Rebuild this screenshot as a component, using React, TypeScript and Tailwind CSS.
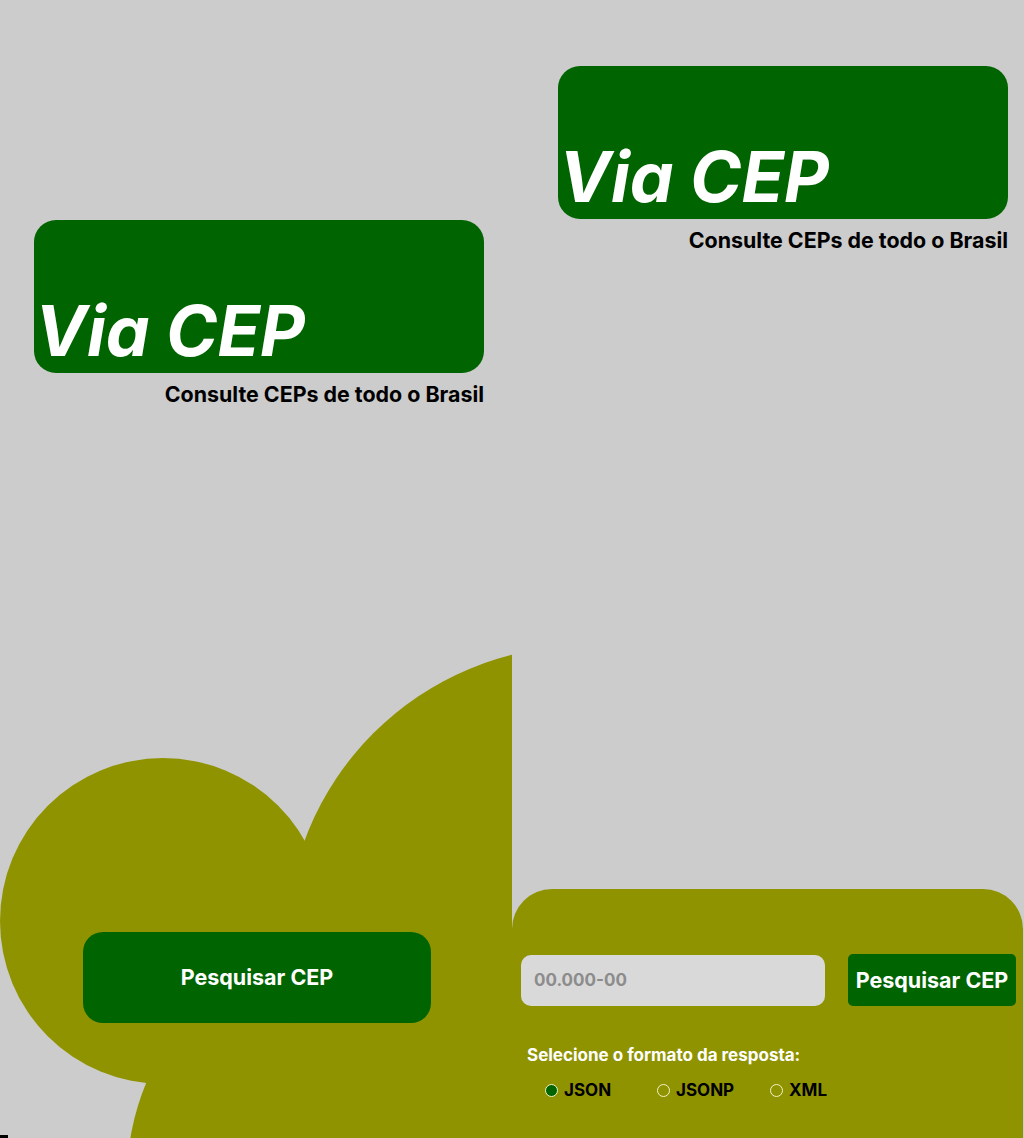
import React from "react";

function Header() {
  return (
    <div className="flex w-[450px] flex-col">
      <div className="flex h-[153px] w-[450px] items-end rounded-[22px] bg-[#006400] pl-[1px] pb-[8px]">
        <h1 className="text-[69.5px] font-bold italic leading-[68px] text-white">Via CEP</h1>
      </div>
      <p className="mt-[9px] text-right text-[21.4px] font-bold leading-[24px] text-black">
        Consulte CEPs de todo o Brasil
      </p>
    </div>
  );
}

function Radio({ label, checked, w }: { label: string; checked?: boolean; w: string }) {
  return (
    <label className={`flex items-center gap-[6px] ${w}`}>
      <span
        className={
          checked
            ? "h-[13px] w-[13px] rounded-full border border-[#f2f2c8] bg-[#006400]"
            : "h-[13px] w-[13px] rounded-full border border-[#f2f2c8]"
        }
      />
      <span className="text-[17px] font-bold leading-[20px] text-black">{label}</span>
    </label>
  );
}

export default function App() {
  return (
    <div
      className="grid h-[1138px] w-[1024px] grid-cols-2 overflow-hidden bg-[#cccccc]"
      style={{ fontFamily: "Inter, 'Liberation Sans', sans-serif" }}
    >
      {/* Left column */}
      <div className="relative flex flex-col overflow-hidden pl-[34px] pt-[220px]">
        <div className="absolute left-[286px] top-[646px] h-[596px] w-[596px] rounded-full bg-[#8f9300]" />
        <div className="absolute left-[127px] top-[929px] h-[500px] w-[500px] rounded-full bg-[#8f9300]" />
        <div className="absolute left-0 top-[758px] h-[326px] w-[326px] rounded-full bg-[#8f9300]" />
        <div className="absolute bottom-0 left-0 h-[3px] w-[8px] bg-black" />
        <div className="relative">
          <Header />
        </div>
        <button className="relative ml-[49px] mt-[526px] flex h-[91px] w-[348px] items-center justify-center rounded-[20px] bg-[#006400] text-[21.5px] font-bold text-white">
          Pesquisar CEP
        </button>
      </div>

      {/* Right column */}
      <div className="flex flex-col overflow-hidden pl-[46px] pt-[66px]">
        <Header />
        <div className="-ml-[46px] mt-auto h-[249px] w-[511px] rounded-t-[40px] bg-[#8f9300] pl-[9px] pt-[65px]">
          <div className="flex items-center">
            <input
              placeholder="00.000-00"
              className="h-[51px] w-[304px] rounded-[10px] bg-[#d9d9d9] px-[13px] text-[17px] font-bold text-[#333] outline-none placeholder:text-[#8c8c8c]"
            />
            <button className="ml-[23px] h-[52px] w-[168px] rounded-[5px] bg-[#006400] text-[21.5px] font-bold text-white">
              Pesquisar CEP
            </button>
          </div>
          <p className="ml-[6px] mt-[39px] text-[17px] font-bold leading-[20px] text-white">
            Selecione o formato da resposta:
          </p>
          <div className="ml-[24px] mt-[15px] flex">
            <Radio label="JSON" checked w="w-[112px]" />
            <Radio label="JSONP" w="w-[113px]" />
            <Radio label="XML" w="w-[100px]" />
          </div>
        </div>
      </div>
    </div>
  );
}
